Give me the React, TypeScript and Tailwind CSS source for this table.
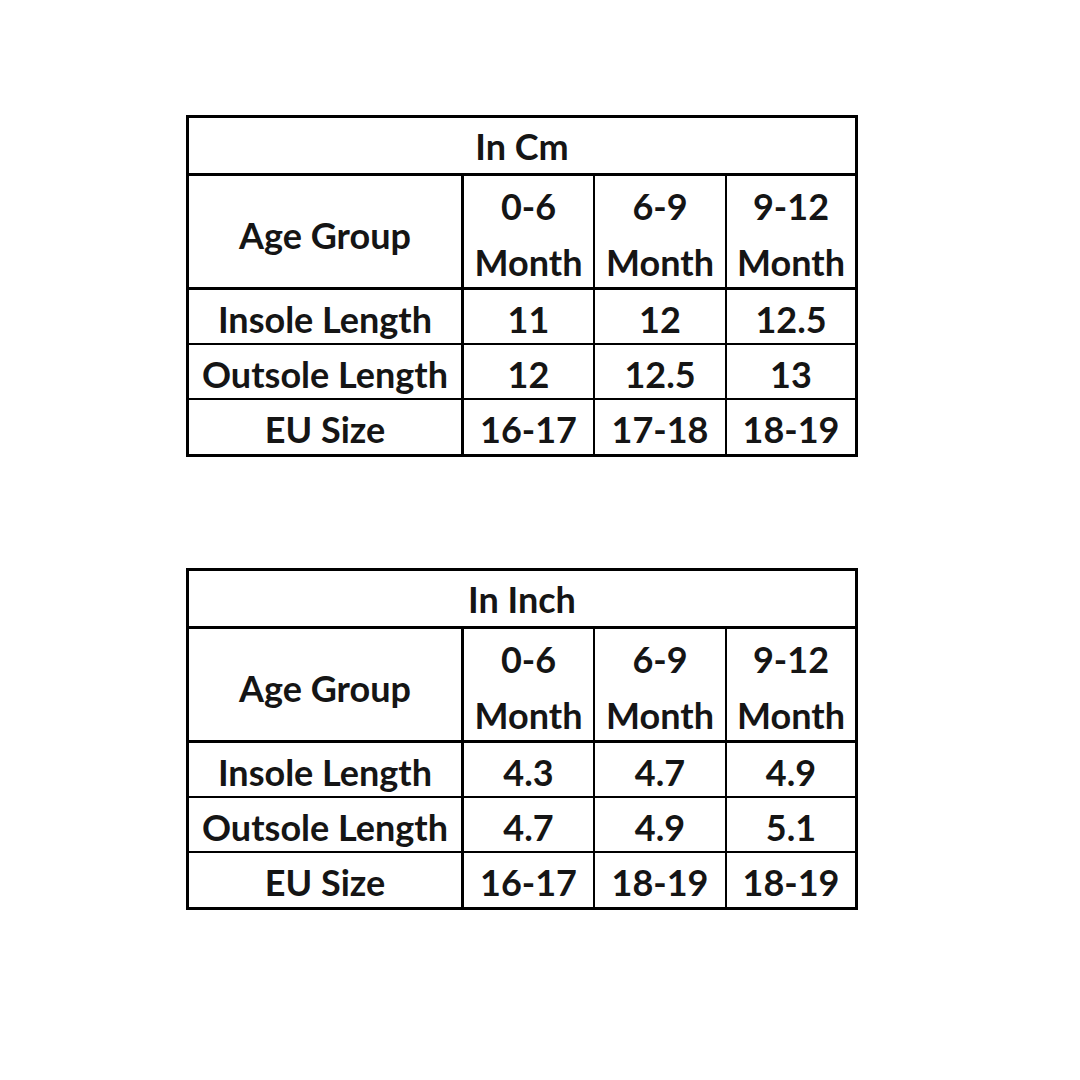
import React from "react";

type T = {
  title: string;
  rows: [string, string, string, string][];
};

const tables: T[] = [
  {
    title: "In Cm",
    rows: [
      ["Insole Length", "11", "12", "12.5"],
      ["Outsole Length", "12", "12.5", "13"],
      ["EU Size", "16-17", "17-18", "18-19"],
    ],
  },
  {
    title: "In Inch",
    rows: [
      ["Insole Length", "4.3", "4.7", "4.9"],
      ["Outsole Length", "4.7", "4.9", "5.1"],
      ["EU Size", "16-17", "18-19", "18-19"],
    ],
  },
];

function Cell({
  children,
  className,
}: {
  children: React.ReactNode;
  className: string;
}) {
  return (
    <div className={"flex items-center justify-center text-center border-black whitespace-nowrap " + className}>
      {children}
    </div>
  );
}

function SizeTable({ t }: { t: T }) {
  const months = ["0-6", "6-9", "9-12"];
  return (
    <div className="w-[672px] border-[3px] border-black bg-white grid grid-cols-[275px_131px_132px_128px] grid-rows-[58px_114px_55px_55px_54px]">
      <Cell className="col-span-4 border-b-[3px]">{t.title}</Cell>
      <Cell className="border-b-[3px] border-r-[3px] pt-[6px]">Age Group</Cell>
      {months.map((m, i) => (
        <Cell
          key={m}
          className={
            "flex-col leading-[56px] border-b-[3px] pt-[4px] " + (i === 0 ? "border-r-[2px]" : i === 1 ? "border-r-[2px]" : "")
          }
        >
          <span>{m}</span>
          <span>Month</span>
        </Cell>
      ))}
      {t.rows.map((r, ri) => (
        <React.Fragment key={ri}>
          {r.map((v, ci) => (
            <Cell
              key={ci}
              className={
                "pt-[4px] " +
                (ri < 2 ? "border-b-[2px] " : "") +
                (ci === 0 ? "border-r-[3px]" : ci < 3 ? "border-r-[2px]" : "")
              }
            >
              {v}
            </Cell>
          ))}
        </React.Fragment>
      ))}
    </div>
  );
}

export default function App() {
  return (
    <div
      className="w-[1080px] h-[1080px] bg-white text-[#151515] font-bold text-[36px] pt-[115px] pl-[186px] flex flex-col gap-[111px]"
      style={{ fontFamily: "Lato, 'Open Sans', sans-serif" }}
    >
      {tables.map((t) => (
        <SizeTable key={t.title} t={t} />
      ))}
    </div>
  );
}
